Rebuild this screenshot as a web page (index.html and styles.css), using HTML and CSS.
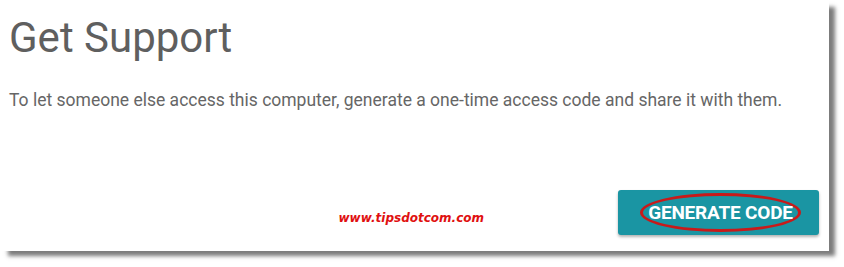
FILE: index.html
```html
<!DOCTYPE html>
<html>
<head>
<meta charset="utf-8">
<link rel="stylesheet" href="styles.css">
</head>
<body>
<div class="panel">
  <h1 class="title">Get Support</h1>
  <p class="desc">To let someone else access this computer, generate a one-time access code and share it with them.</p>
  <div class="footer">
    <span class="watermark">www.tipsdotcom.com</span>
    <button class="btn"><span class="btn-label">GENERATE CODE</span></button>
  </div>
</div>
</body>
</html>
```
FILE: styles.css
```css
html, body {
  margin: 0;
  padding: 0;
  background: #ffffff;
}
body {
  width: 844px;
  height: 267px;
  overflow: hidden;
  font-family: Roboto, "Liberation Sans", sans-serif;
}
.panel {
  width: 829px;
  height: 251px;
  background: #ffffff;
  box-shadow: 7px 6px 4px -1px rgba(80, 80, 80, 0.75);
  box-sizing: border-box;
  padding: 14px 10px 0 9px;
  display: flex;
  flex-direction: column;
}
.title {
  margin: 0;
  font-size: 42px;
  font-weight: 400;
  color: #5f5f5f;
  line-height: 48px;
}
.desc {
  margin: 28px 0 0 0;
  font-size: 17.5px;
  color: #666666;
  line-height: 20px;
}
.footer {
  margin-top: 80px;
  display: flex;
  align-items: center;
  justify-content: flex-end;
}
.watermark {
  font-family: "DejaVu Sans", Verdana, sans-serif;
  font-weight: bold;
  font-style: italic;
  font-size: 12px;
  color: #e01010;
  margin-right: 134px;
  margin-top: 10px;
}
.btn {
  width: 201px;
  height: 45px;
  background: #1a95a3;
  border: none;
  border-radius: 3px;
  box-shadow: 0 2px 3px rgba(0, 0, 0, 0.3);
  display: flex;
  align-items: center;
  justify-content: center;
  padding: 0;
  position: relative;
}
.btn-label {
  font-family: Roboto, sans-serif;
  font-weight: 700;
  font-size: 19px;
  color: #ffffff;
  letter-spacing: -0.2px;
  position: relative;
  padding: 5px 5px;
  border: 3px solid #c81a1a;
  border-radius: 50%;
  margin-left: 4px;
}
```
